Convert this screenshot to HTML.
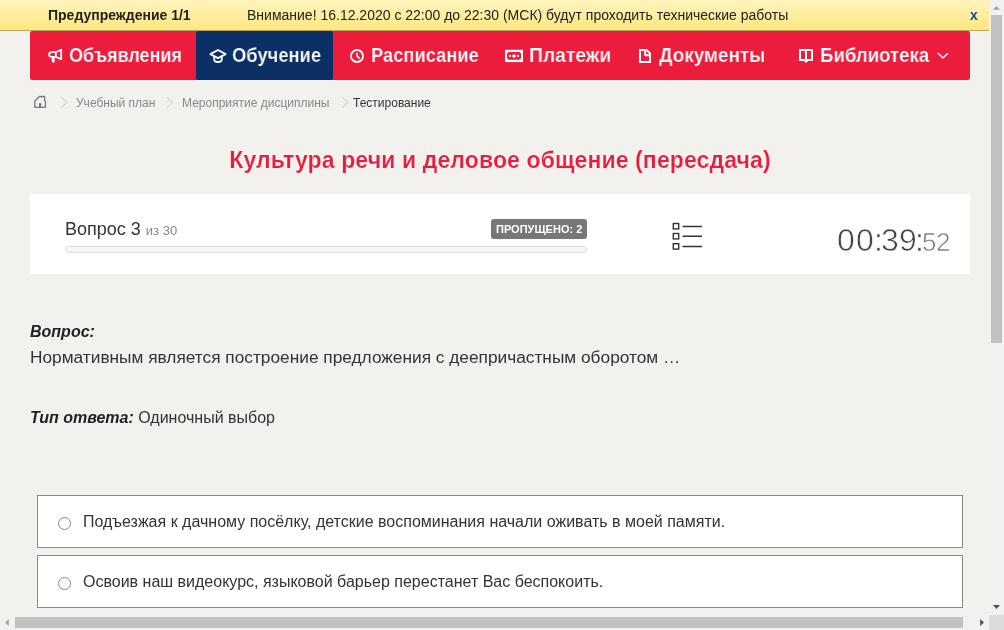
<!DOCTYPE html>
<html><head><meta charset="utf-8">
<style>
html,body{margin:0;padding:0;}
body{width:1004px;height:630px;overflow:hidden;position:relative;-webkit-font-smoothing:antialiased;background:#f2f1ee;font-family:"Liberation Sans",sans-serif;color:#333;}
.a{position:absolute;white-space:nowrap;will-change:transform;}
#warn{position:absolute;left:0;top:0;width:989px;height:30px;background:linear-gradient(#fef4bc,#fde780);border-bottom:1px solid #b9a55a;}
#nav{position:absolute;left:30px;top:31px;width:940px;height:49px;background:#ec1c3c;border-radius:2px;}
#tab{position:absolute;left:196px;top:31px;width:137px;height:49px;background:#0a3066;border-radius:2px;}
.nt{font-size:20px;font-weight:bold;color:#fff;line-height:22px;top:44px;transform-origin:0 0;-webkit-text-stroke:0.2px #ec1c3c;}
.bc{font-size:12px;line-height:14px;top:96px;color:#888;}
#card{position:absolute;left:30px;top:194px;width:940px;height:80px;background:#fff;}
.opt{position:absolute;left:37px;width:924px;height:51px;border:1px solid #888;background:#fff;}
.radio{position:absolute;left:58px;width:11px;height:11px;border:1px solid #888;border-radius:50%;background:#fff;}
.tm{top:223.6px;font-size:32px;line-height:32px;color:#444;-webkit-text-stroke:0.6px #fff;}
.ot{font-size:16px;line-height:18px;color:#333;}
/* scrollbars */
#vs{position:absolute;left:989px;top:0;width:15px;height:615px;background:#f1f1f1;}
#vth{position:absolute;left:991px;top:15px;width:11px;height:328px;background:#c1c1c1;}
#hs{position:absolute;left:0;top:615px;width:989px;height:15px;background:#f1f1f1;}
#hth{position:absolute;left:15px;top:617px;width:948px;height:11px;background:#c1c1c1;}
#corner{position:absolute;left:989px;top:615px;width:15px;height:15px;background:#dcdcdc;}
</style></head><body>

<div id="warn"></div>
<div class="a" style="left:48px;top:7px;font-size:14px;line-height:16px;font-weight:bold;color:#222;">Предупреждение 1/1</div>
<div class="a" style="left:247px;top:7px;font-size:14px;line-height:16px;color:#222;">Внимание! 16.12.2020 с 22:00 до 22:30 (МСК) будут проходить технические работы</div>
<div class="a" style="left:969.7px;top:7px;font-size:14px;line-height:16px;font-weight:bold;color:#124c94;">x</div>

<div id="nav"></div>
<div id="tab"></div>
<div class="a nt" style="left:69px;transform:scaleX(0.9);">Объявления</div>
<div class="a nt" style="left:231.5px;transform:scaleX(0.918);-webkit-text-stroke-color:#0a3066;">Обучение</div>
<div class="a nt" style="left:370.5px;transform:scaleX(0.916);">Расписание</div>
<div class="a nt" style="left:528.5px;transform:scaleX(0.965);">Платежи</div>
<div class="a nt" style="left:659px;transform:scaleX(0.946);">Документы</div>
<div class="a nt" style="left:819.5px;transform:scaleX(0.93);">Библиотека</div>

<!-- breadcrumb -->
<div class="a bc" style="left:76px;">Учебный план</div>
<div class="a bc" style="left:182px;">Мероприятие дисциплины</div>
<div class="a bc" style="left:353px;color:#333;">Тестирование</div>

<div class="a" style="left:30px;width:940px;text-align:center;top:147px;font-size:23px;line-height:26px;font-weight:bold;color:#e61d3e;letter-spacing:0.12px;-webkit-text-stroke:0.2px #f2f1ee;">Культура речи и деловое общение (пересдача)</div>

<div id="card"></div>
<div class="a" style="left:65px;top:219px;font-size:18px;line-height:20px;color:#333;">Вопрос 3 <span style="font-size:13px;color:#888;">из 30</span></div>
<div class="a" style="left:65px;top:246px;width:520px;height:5px;border:1px solid #ddd;border-radius:4px;background:#f6f6f6;"></div>
<div class="a" style="left:491px;top:219px;width:96px;height:20px;background:#777;border-radius:3px;"></div>
<div class="a" style="left:495.6px;top:223px;font-size:11px;line-height:13px;font-weight:bold;color:#fff;">ПРОПУЩЕНО: 2</div>
<div class="a tm" style="left:837.3px;">0</div><div class="a tm" style="left:855.8px;">0</div><div class="a tm" style="left:873.5px;">:</div><div class="a tm" style="left:880.9px;">3</div><div class="a tm" style="left:898.8px;">9</div><div class="a tm" style="left:914.8px;">:</div>
<div class="a tm" style="left:921.5px;top:225.7px;font-size:26px;color:#777;">5</div><div class="a tm" style="left:936px;top:225.7px;font-size:26px;color:#777;">2</div>

<div class="a" style="left:30px;top:322.8px;font-size:16px;line-height:18px;font-weight:bold;font-style:italic;color:#222;">Вопрос:</div>
<div class="a" style="left:30px;top:347px;font-size:17.3px;line-height:20px;color:#333;">Нормативным является построение предложения с деепричастным оборотом …</div>
<div class="a" style="left:30px;top:408.5px;font-size:16px;line-height:18px;color:#333;"><b><i style="color:#222;">Тип ответа:</i></b> Одиночный выбор</div>

<div class="opt" style="top:495px;"></div>
<div class="radio" style="top:517px;"></div>
<div class="a ot" style="left:83px;top:513px;">Подъезжая к дачному посёлку, детские воспоминания начали оживать в моей памяти.</div>
<div class="opt" style="top:555px;"></div>
<div class="radio" style="top:577px;"></div>
<div class="a ot" style="left:83px;top:573px;">Освоив наш видеокурс, языковой барьер перестанет Вас беспокоить.</div>


<svg class="a" style="left:0;top:0;" width="1004" height="630" viewBox="0 0 1004 630">
<g fill="none" stroke="#fff" stroke-width="1.8" stroke-linejoin="round">
 <!-- megaphone -->
 <path d="M55.8,52.2 L61.2,49.8 L61.2,59.2 L55.8,56.9 Z"/>
 <path d="M55.8,52.1 H52.3 A3.3,2.4 0 0 0 52.3,56.9 H55.8"/>
 <path d="M53.1,58 L53.3,61.2" stroke-width="3" stroke-linecap="round"/>
 <!-- grad cap -->
 <path d="M218,50 L225.6,54.1 L218,58.1 L210.4,54.1 Z"/>
 <path d="M214.2,56 V59.5 C214.2,61.5 216,62 218,62 C220,62 221.8,61.5 221.8,59.5 V56"/>
 <!-- clock -->
 <circle cx="357" cy="56" r="6"/>
 <path d="M357,53.2 V55.9 L359.2,58.1" stroke-width="1.6" stroke-linecap="round"/>
 <!-- document -->
 <path d="M640,50 H646.6 L650,53.4 V61.9 H640 Z" stroke-width="2" stroke-linejoin="miter"/>
 <path d="M645.2,50 V55.3 H650" stroke-width="1.9"/>
 <!-- book -->
 <path d="M800,50 H806 V60 H800 Z M806,50 H812 V60 H806 Z" stroke-width="2" stroke-linejoin="miter"/>
 <path d="M803.2,60.4 L806,63 L808.8,60.4 Z" fill="#fff" stroke="none"/>
 <!-- chevron -->
 <path d="M938.3,53.5 L943,58.1 L947.6,53.5" stroke-width="1.4" stroke-linecap="round"/>
</g>
<!-- money -->
<rect x="505" y="49.8" width="18" height="12.3" fill="#fff"/>
<path d="M508.6,51.9 H519.4 L521,53.5 V58.2 L519.4,59.8 H508.6 L507,58.2 V53.5 Z" fill="#ec1c3c"/>
<rect x="509" y="55" width="2" height="2" fill="#fff"/>
<rect x="517" y="55" width="2" height="2" fill="#fff"/>
<circle cx="514" cy="56" r="1.8" fill="#fff"/>
<!-- breadcrumb home -->
<g fill="none" stroke="#777" stroke-width="1.3" stroke-linejoin="round">
 <path d="M34.8,101 L39.8,96.3 H41 L41.6,97.2 L42.2,96.3 H44.6 V100.6 L45.4,101.4 V107.3 H34.8 Z"/>
</g>
<rect x="39" y="103.2" width="2.2" height="4.4" fill="#777"/>
<g fill="none" stroke="#c4c4c4" stroke-width="1">
 <path d="M61.3,97.2 L66.8,102.4 L61.3,107.7"/>
 <path d="M167,97.2 L172.5,102.4 L167,107.7"/>
 <path d="M342.3,97.2 L347.8,102.4 L342.3,107.7"/>
</g>
<!-- list icon -->
<g fill="none" stroke="#333" stroke-width="1.4">
 <rect x="673.3" y="223.5" width="5.4" height="5.4"/>
 <rect x="673.3" y="233.5" width="5.4" height="5.4"/>
 <rect x="673.3" y="243.7" width="5.4" height="5.4"/>
 <path d="M682.5,226.4 H702 M682.5,236.2 H702 M682.5,246.5 H702" stroke-width="1.5"/>
</g>
</svg>
<div id="vs"></div><div id="vth"></div>
<div id="hs"></div><div id="hth"></div>
<div id="corner"></div>
<svg class="a" style="left:0;top:0;" width="1004" height="630" viewBox="0 0 1004 630">
<path d="M996.5,6 L1000,9.8 L993,9.8 Z" fill="#a3a3a3"/>
<path d="M993,605 L1000,605 L996.5,609 Z" fill="#505050"/>
<path d="M8.8,619 L8.8,626 L5,622.5 Z" fill="#a3a3a3"/>
<path d="M980.2,619 L980.2,626 L984,622.5 Z" fill="#505050"/>
</svg>
</body></html>
